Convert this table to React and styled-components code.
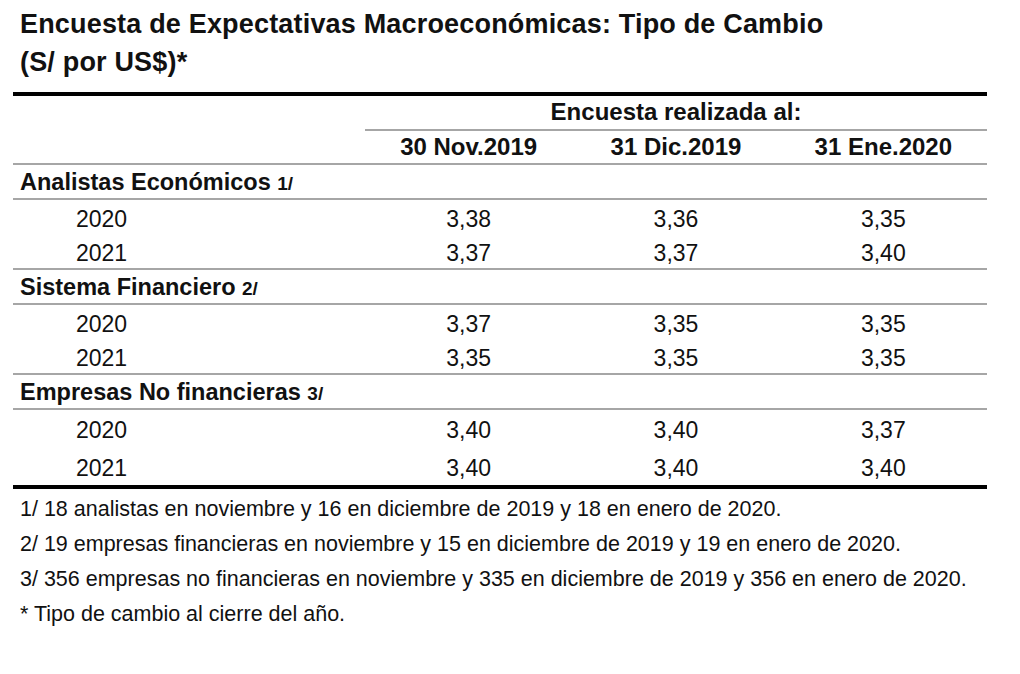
import React from "react";
import styled, { createGlobalStyle } from "styled-components";

const Global = createGlobalStyle`
  html, body { margin: 0; padding: 0; background: #fff; }
  body { font-family: "Liberation Sans", Arial, sans-serif; color: #111; }
`;

const Page = styled.div`
  width: 1020px;
  height: 674px;
  padding: 5px 0 0 13px;
  box-sizing: border-box;
`;

const Title = styled.h1`
  margin: 0 0 11px 7px;
  font-size: 27px;
  letter-spacing: 0.18px;
  line-height: 38px;
  font-weight: 700;
  color: #111;
`;

const Table = styled.div`
  width: 974px;
  border-top: 4px solid #000;
  border-bottom: 4px solid #000;
`;

const Row = styled.div`
  display: grid;
  grid-template-columns: 352px repeat(3, 1fr);
  height: ${(p) => p.$h}px;
  border-bottom: ${(p) => (p.$line ? "2px solid #a6a6a6" : "none")};
  align-items: center;
`;

const SuperCell = styled.div`
  grid-column: 2 / 5;
  height: 100%;
  display: flex;
  align-items: center;
  justify-content: center;
  font-size: 24px;
  font-weight: 700;
  border-bottom: 2px solid #a6a6a6;
`;

const HeadCell = styled.div`
  text-align: center;
  font-size: 24px;
  font-weight: 700;
`;

const GroupLabel = styled.div`
  grid-column: 1 / 5;
  padding: 2px 0 0 7px;
  font-size: 23.5px;
  font-weight: 700;
`;

const Note = styled.span`
  font-size: 19px;
`;

const Year = styled.div`
  padding: 3px 0 0 63px;
  font-size: 23px;
`;

const Value = styled.div`
  padding-top: 3px;
  text-align: center;
  font-size: 23px;
`;

const Footnotes = styled.div`
  padding: 3px 0 0 7px;
`;

const Footnote = styled.p`
  margin: 0;
  font-size: 21.5px;
  line-height: 35px;
  color: #111;
  white-space: pre;
`;

const groups = [
  {
    label: "Analistas Económicos",
    note: "1/",
    h: [35, 33],
    rows: [
      ["2020", "3,38", "3,36", "3,35"],
      ["2021", "3,37", "3,37", "3,40"],
    ],
  },
  {
    label: "Sistema Financiero",
    note: "2/",
    h: [35, 33],
    rows: [
      ["2020", "3,37", "3,35", "3,35"],
      ["2021", "3,35", "3,35", "3,35"],
    ],
  },
  {
    label: "Empresas No financieras",
    note: "3/",
    h: [38, 37],
    rows: [
      ["2020", "3,40", "3,40", "3,37"],
      ["2021", "3,40", "3,40", "3,40"],
    ],
  },
];

const notes = [
  "1/ 18 analistas en noviembre y 16 en diciembre de 2019 y 18 en enero de 2020.",
  "2/ 19 empresas financieras en noviembre y 15 en diciembre de 2019 y 19 en enero de 2020.",
  "3/ 356 empresas no financieras en noviembre y 335 en diciembre de 2019 y 356 en enero de 2020.",
  "* Tipo de cambio al cierre del año.",
];

export default function App() {
  return (
    <Page>
      <Global />
      <Title>
        Encuesta de Expectativas Macroeconómicas: Tipo de Cambio
        <br />
        (S/ por US$)*
      </Title>
      <Table>
        <Row $h={34}>
          <div />
          <SuperCell>Encuesta realizada al:</SuperCell>
        </Row>
        <Row $h={33} $line>
          <div />
          <HeadCell>30 Nov.2019</HeadCell>
          <HeadCell>31 Dic.2019</HeadCell>
          <HeadCell>31 Ene.2020</HeadCell>
        </Row>
        {groups.map((g, gi) => (
          <React.Fragment key={g.label}>
            <Row $h={33} $line>
              <GroupLabel>
                {g.label} <Note>{g.note}</Note>
              </GroupLabel>
            </Row>
            {g.rows.map((r, ri) => (
              <Row
                key={r[0]}
                $h={g.h[ri]}
                $line={ri === g.rows.length - 1 && gi < groups.length - 1}
              >
                <Year>{r[0]}</Year>
                <Value>{r[1]}</Value>
                <Value>{r[2]}</Value>
                <Value>{r[3]}</Value>
              </Row>
            ))}
          </React.Fragment>
        ))}
      </Table>
      <Footnotes>
        {notes.map((n) => (
          <Footnote key={n}>{n}</Footnote>
        ))}
      </Footnotes>
    </Page>
  );
}
